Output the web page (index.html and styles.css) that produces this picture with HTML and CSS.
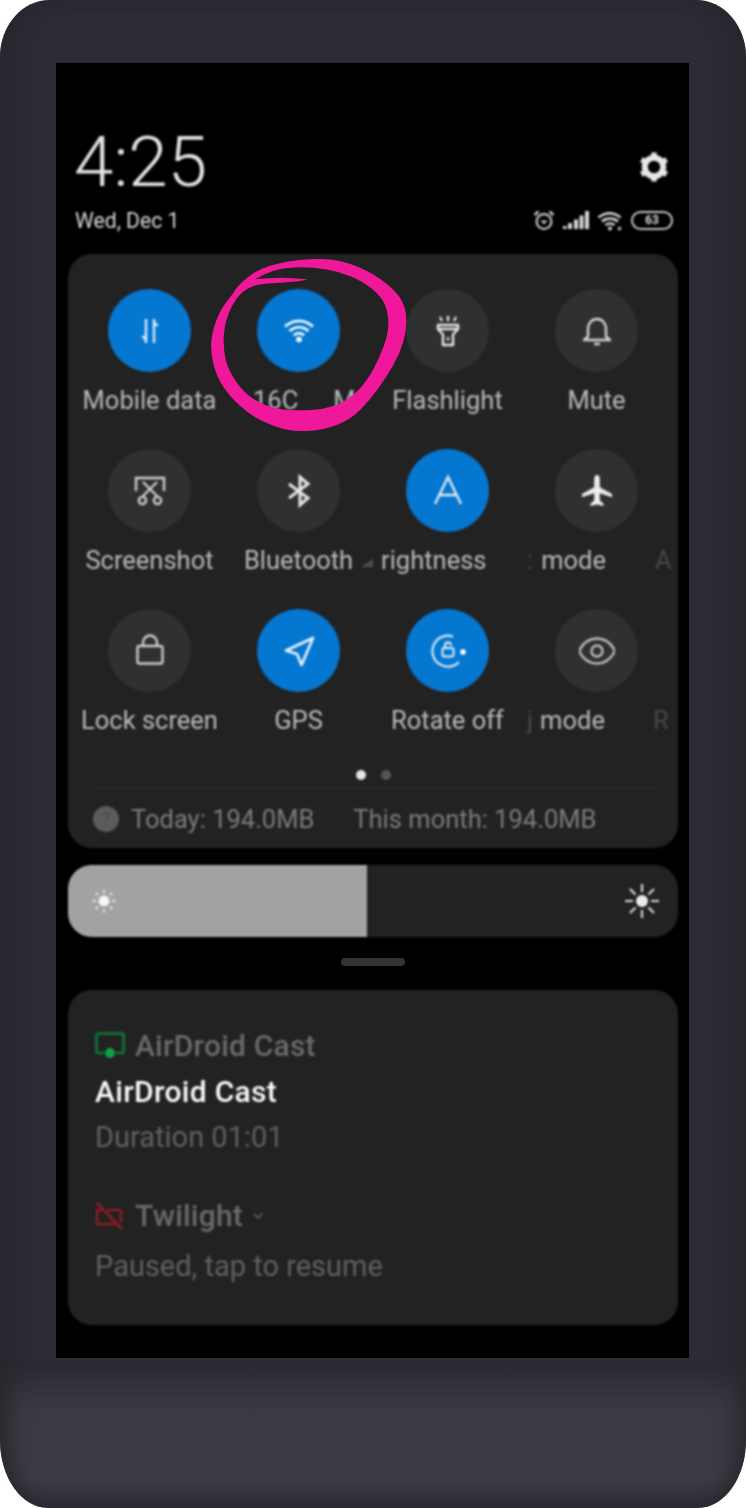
FILE: index.html
```html
<!DOCTYPE html>
<html lang="en">
<head>
<meta charset="utf-8">
<title>Quick settings</title>
<link rel="stylesheet" href="styles.css">
</head>
<body>
<div class="phone">
  <main class="screen">
    <header class="head">
      <div class="clock-col">
        <div class="clock">4:25</div>
        <div class="date">Wed, Dec 1</div>
      </div>
      <div class="status-col">
        <svg class="gear" viewBox="0 0 32 32"><circle cx="16" cy="16" r="9.2" fill="none" stroke="#e8e8e8" stroke-width="6"/><g stroke="#e8e8e8" stroke-width="5.5"><path d="M16 1.5v5M16 25.5v5M3.4 8.7l4.3 2.5M24.3 20.8l4.3 2.5M3.4 23.3l4.3-2.5M24.3 11.2l4.3-2.5"/></g></svg>
        <div class="status">
          <svg class="st-alarm" viewBox="0 0 22 22"><circle cx="11" cy="12.500" r="7.400" fill="none" stroke="#c4c4c4" stroke-width="2.200"/><path d="M7.500 11.500h7L11 15.500z" fill="#c4c4c4"/><path d="M1.500 6 5.500 2.500M20.500 6 16.500 2.500" stroke="#c4c4c4" stroke-width="2.600"/></svg>
          <svg class="st-signal" viewBox="0 0 26 18"><path d="M0 15h3.500v3H0zM5 12h4v6H5zM11 8.500h4V18h-4zM16.500 4.500h4V18h-4zM22 0h4v18h-4z" fill="#d6d6d6"/></svg>
          <svg class="st-wifi" viewBox="0 0 26 21"><path d="M1.500 7.500c6.500-5.800 15.500-5.800 22 0M5 11.500c4.500-4 11.500-4 16 0M8.500 15c2.500-2 6.500-2 9 0" fill="none" stroke="#d6d6d6" stroke-width="2.500"/><circle cx="13" cy="18.500" r="2" fill="#d6d6d6"/><circle cx="22.500" cy="18.500" r="2" fill="#a0a0a0"/></svg>
          <div class="battery">63</div>
        </div>
      </div>
    </header>

    <section class="panel">
      <div class="grid">
        <div class="tile">
          <div class="disc on"><svg class="ic" viewBox="0 0 36 36"><path d="M14 6v24M22 30V6" fill="none" stroke="#dbe9f5" stroke-width="2.400"/><path d="M15 30 9 23h6zM21 6l6 7h-6z" fill="#dbe9f5"/></svg></div>
          <div class="label">Mobile data</div>
        </div>
        <div class="tile">
          <div class="disc on"><svg class="ic" viewBox="0 0 36 36"><path d="M4 13.500c8.500-7.500 19.500-7.500 28 0M8.500 18c6-5 13-5 19 0M12.800 22.200c3.200-2.500 7.200-2.500 10.400 0" fill="none" stroke="#fff" stroke-width="2.500"/><circle cx="18" cy="26.500" r="2.800" fill="#fff"/></svg></div>
          <div class="label split-wifi"><span>16C</span><span>M</span></div>
        </div>
        <div class="tile">
          <div class="disc"><svg class="ic" viewBox="0 0 36 36"><path d="M8 12h20v4l-5 5.500V32H13V21.500L8 16zM8.500 16h19" fill="none" stroke="#e2e2e2" stroke-width="2.500" stroke-linejoin="round"/><path d="M18 24v3.500" stroke="#e2e2e2" stroke-width="2"/><path d="M10 4l2 4M18 3v5M26 4l-2 4" stroke="#e2e2e2" stroke-width="2.400"/></svg></div>
          <div class="label">Flashlight</div>
        </div>
        <div class="tile">
          <div class="disc"><svg class="ic" viewBox="0 0 36 36"><path d="M5 27h26l-4-3.500V16c0-5.500-3.500-10-9-10S9 10.500 9 16v7.500zM15 31h6" fill="none" stroke="#d2d2d2" stroke-width="2.400" stroke-linejoin="round"/></svg></div>
          <div class="label">Mute</div>
        </div>

        <div class="tile">
          <div class="disc"><svg class="ic" viewBox="0 0 36 36"><path d="M4 18V5h28v13" fill="none" stroke="#cdcdcd" stroke-width="2.400"/><path d="M11 9l14 14M25 9 11 23" stroke="#cdcdcd" stroke-width="2.400"/><circle cx="10.500" cy="27.500" r="3.600" fill="none" stroke="#cdcdcd" stroke-width="2.400"/><circle cx="25.500" cy="27.500" r="3.600" fill="none" stroke="#cdcdcd" stroke-width="2.400"/></svg></div>
          <div class="label">Screenshot</div>
        </div>
        <div class="tile">
          <div class="disc"><svg class="ic" viewBox="0 0 36 36"><path d="M8 11l19 14-8 7V4l8 7L8 25" fill="none" stroke="#e6e6e6" stroke-width="3"/></svg></div>
          <div class="label bt-label">Bluetooth<i class="wedge"></i></div>
        </div>
        <div class="tile">
          <div class="disc on"><svg class="ic" viewBox="0 0 36 36"><path d="M5 31 18 4l13 27M9.500 22h17" fill="none" stroke="#dbe9f5" stroke-width="2.400"/></svg></div>
          <div class="label rightness">rightness</div>
        </div>
        <div class="tile">
          <div class="disc"><svg class="ic" viewBox="0 0 36 36"><path d="M18 2c1.700 0 2.800 2 2.800 4.500v7.800L33 21v3.200l-12.200-4v7.300l3.700 3V33L18 31.500 11.500 33v-2.500l3.700-3v-7.300L3 24.200V21l12.200-6.700V6.500C15.200 4 16.300 2 18 2z" fill="#ececec"/></svg></div>
          <div class="label mode-label"><span class="faint">:</span><span>mode</span><span class="faint fade-a">A</span></div>
        </div>

        <div class="tile">
          <div class="disc"><svg class="ic" viewBox="0 0 36 36"><rect x="5.500" y="13" width="25" height="17.500" rx="2" fill="none" stroke="#cdcdcd" stroke-width="2.400"/><path d="M11 13V9.500a7 7 0 0 1 14 0V13" fill="none" stroke="#cdcdcd" stroke-width="2.400"/></svg></div>
          <div class="label">Lock screen</div>
        </div>
        <div class="tile">
          <div class="disc on"><svg class="ic" viewBox="0 0 36 36"><path d="M32 5 5 17.500l11 3.500 4.500 11z" fill="none" stroke="#eaf3fb" stroke-width="2.600" stroke-linejoin="round"/></svg></div>
          <div class="label">GPS</div>
        </div>
        <div class="tile">
          <div class="disc on"><svg class="ic" viewBox="0 0 36 36"><path d="M29 29A15.500 15.500 0 1 1 23 3.500" fill="none" stroke="#d8e8f5" stroke-width="2.200"/><rect x="12.500" y="15" width="11" height="8.500" rx="1.500" fill="none" stroke="#e6f1fa" stroke-width="2"/><path d="M15 15v-2.500a3 3 0 0 1 6 0" fill="none" stroke="#e6f1fa" stroke-width="2"/><circle cx="33" cy="19" r="2.800" fill="#fff"/></svg></div>
          <div class="label">Rotate off</div>
        </div>
        <div class="tile">
          <div class="disc"><svg class="ic" viewBox="0 0 36 36"><path d="M0 18C4 10 10.500 5.500 18 5.500S32 10 36 18c-4 8-10.500 12.500-18 12.500S4 26 0 18z" fill="none" stroke="#bdbdbd" stroke-width="2.400"/><circle cx="18" cy="18" r="5.500" fill="none" stroke="#bdbdbd" stroke-width="2.400"/></svg></div>
          <div class="label mode-label second"><span class="faint">j</span><span>mode</span><span class="faint fade-r">R</span></div>
        </div>
      </div>

      <div class="dots"><i class="dot cur"></i><i class="dot"></i></div>
      <div class="usage">
        <span class="help">?</span>
        <span class="today">Today: 194.0MB</span>
        <span>This month: 194.0MB</span>
      </div>
    </section>

    <div class="slider">
      <div class="fill">
        <svg class="sun-s" viewBox="0 0 24 24"><circle cx="12" cy="12" r="5" fill="#f6f6f6"/><path d="M12 1.500v3M12 19.500v3M1.500 12h3M19.500 12h3M4.500 4.500l2 2M17.500 17.500l2 2M4.500 19.500l2-2M17.500 6.500l2-2" stroke="#d8d8d8" stroke-width="2.200"/></svg>
      </div>
      <svg class="sun-l" viewBox="0 0 34 34"><circle cx="17" cy="17" r="6" fill="#ececec"/><path d="M17 0v8M17 26v8M0 17h8M26 17h8M5 5l5.500 5.500M23.500 23.500 29 29M5 29l5.500-5.500M23.500 10.500 29 5" stroke="#d8d8d8" stroke-width="2.200"/></svg>
    </div>

    <div class="handle"></div>

    <section class="card">
      <div class="app-row">
        <svg class="app-ic" viewBox="0 0 30 28"><path d="M9 21H3a1.500 1.500 0 0 1-1.500-1.500V3A1.500 1.500 0 0 1 3 1.500h24A1.500 1.500 0 0 1 28.500 3v16.500A1.500 1.500 0 0 1 27 21h-6" fill="none" stroke="#0e7a34" stroke-width="2.600"/><circle cx="15" cy="21" r="5" fill="#12a045"/></svg>
        <span class="app-name">AirDroid Cast</span>
      </div>
      <div class="note-title">AirDroid Cast</div>
      <div class="note-sub">Duration 01:01</div>
      <div class="app-row second-app">
        <svg class="app-ic twi" viewBox="0 0 28 30"><path d="M7 9H4a2 2 0 0 0-2 2v10a2 2 0 0 0 2 2h17M12 9h12a2 2 0 0 1 2 2v10" fill="none" stroke="#8c1c26" stroke-width="2.600"/><path d="M2 2l25 26" stroke="#8c1c26" stroke-width="2.600"/></svg>
        <span class="app-name">Twilight</span>
        <svg class="chev" viewBox="0 0 12 8"><path d="M1.500 1.500 6 6l4.500-4.500" fill="none" stroke="#5e5e5e" stroke-width="1.600"/></svg>
      </div>
      <div class="note-sub paused">Paused, tap to resume</div>
    </section>

    <svg class="scribble" viewBox="0 0 645 570" aria-hidden="true"><path fill-rule="evenodd" d="M107.500 117.500Q115 105 142.500 82.500Q170 60 210 47.500Q250 35 300 30Q350 25 390 28.500Q430 32 475 51Q520 70 555 97.500Q590 125 604 150Q618 175 619 207.500Q620 240 610 275Q600 310 580 345Q560 380 535 415Q510 450 480 480Q450 510 410 525Q370 540 330 542.500Q290 545 255 537.500Q220 530 185 512.500Q150 495 120 467.500Q90 440 70 410Q50 380 41 345Q32 310 33.500 280Q35 250 47.500 215Q60 180 80 155Q100 130 107.500 117.500ZM165 88Q240 78 322 88Q300 96 240 98Q180 100 155 110Q130 120 112.500 142.500Q95 165 83.500 197.500Q72 230 71 265Q70 300 77.500 330Q85 360 105 390Q125 420 147.500 437.500Q170 455 200 466.500Q230 478 265 480Q300 482 335 480Q370 478 405 466.500Q440 455 470 425Q500 395 520 357.500Q540 320 552.500 285Q565 250 565 220Q565 190 555 165Q545 140 517.500 117.500Q490 95 455 80Q420 65 380 58.500Q340 52 300 52Q260 52 230 60Q200 68 165 88Z" fill="#f0189a"/></svg>
  </main>
</div>
</body>
</html>
```

FILE: styles.css
```css
* { box-sizing: border-box; }
html, body { margin: 0; padding: 0; background: #fff; }
body { width: 746px; height: 1508px; overflow: hidden; font-family: Roboto, "Noto Sans", sans-serif; }

.phone {
  width: 746px;
  height: 1508px;
  padding: 63px 57px 150px 56px;
  border-radius: 50px 50px 48px 48px / 57px 57px 68px 68px;
  background: linear-gradient(180deg, #2c2b36 0, #2c2b36 1358px, #2b2a34 1365px, #3b3943 1410px, #3d3b45 1480px, #2d2c36 1508px);
  box-shadow: inset 22px 0 22px -14px #26262a, inset -22px 0 22px -14px #26262a;
}

.screen {
  position: relative;
  width: 633px;
  height: 1295px;
  padding: 0 11px 0 12px;
  background: #000;
  display: flex;
  flex-direction: column;
}

.head, .panel, .slider, .card { filter: blur(0.8px); }

.head { display: flex; justify-content: space-between; height: 191px; }
.clock-col { padding: 61px 0 0 7px; }
.clock { font-size: 71px; font-weight: 300; line-height: 76px; color: #e2e2e2; margin-left: -1px; }
.date { margin-top: 9px; font-size: 21.200px; line-height: 24px; color: #d8d8d8; }

.status-col { display: flex; flex-direction: column; align-items: flex-end; padding-top: 88px; }
.gear { width: 32px; height: 32px; margin-right: 8px; }
.status { display: flex; align-items: center; gap: 8px; margin-top: 26px; margin-right: 5px; }
.st-alarm { width: 22px; height: 22px; }
.st-signal { width: 26px; height: 18px; }
.st-wifi { width: 26px; height: 21px; }
.battery {
  width: 42px; height: 19px; border: 2.500px solid #c4c4c4; border-radius: 10px;
  font-size: 12px; line-height: 14px; text-align: center; color: #d8d8d8; font-weight: 700;
}

.panel {
  width: 610px; height: 594px;
  background: #222222;
  border-radius: 24px;
  padding: 35px 7px 0;
}
.grid { display: grid; grid-template-columns: repeat(4, 149px); grid-auto-rows: 160px; }
.tile { display: flex; flex-direction: column; align-items: center; min-width: 0; }
.disc {
  width: 83px; height: 83px; border-radius: 50%;
  background: #303030;
  display: flex; align-items: center; justify-content: center;
}
.disc.on { background: #0477d1; }
.ic { width: 36px; height: 36px; }
.label {
  margin-top: 13px; width: 149px; height: 30px;
  font-size: 25.500px; line-height: 30px; color: #bababa;
  text-align: center; white-space: nowrap;
}
.split-wifi { display: flex; padding-left: 29px; gap: 35px; }
.bt-label { position: relative; }
.wedge {
  position: absolute; left: 137px; top: 14px; width: 0; height: 0;
  border-style: solid; border-width: 0 0 8px 12px;
  border-color: transparent transparent #4e4e4e transparent;
}
.rightness { text-align: left; padding-left: 8px; }
.mode-label { display: flex; align-items: baseline; padding-left: 5px; gap: 8px; }
.mode-label.second { padding-left: 5px; gap: 7px; }
.faint { color: #484848; }
.fade-a { margin-left: 41px; }
.fade-r { margin-left: 41px; }

.dots { display: flex; justify-content: center; gap: 15px; height: 10px; margin-top: 1px; }
.dot { width: 10px; height: 10px; border-radius: 50%; background: #555; }
.dot.cur { background: #e4e4e4; }

.usage {
  margin: 8px 17px 0;
  height: 60px;
  border-top: 1px solid #2e2e2e;
  display: flex; align-items: center;
  font-size: 25.500px; color: #7c7c7c;
}
.help {
  width: 26px; height: 26px; border-radius: 50%; background: #5c5c5c; color: #4c4c4c;
  font-size: 18px; line-height: 26px; text-align: center; margin: 0 12px 0 1px;
}
.today { margin-right: 39px; }

.slider {
  position: relative;
  width: 610px; height: 72px; margin-top: 17px;
  background: #222222; border-radius: 24px; overflow: hidden;
  display: flex; align-items: center; justify-content: flex-end;
}
.fill {
  position: absolute; left: 0; top: 0; bottom: 0; width: 299px;
  background: #a2a2a2; display: flex; align-items: center; padding-left: 23px;
}
.sun-s { width: 26px; height: 26px; }
.sun-l { width: 34px; height: 34px; margin-right: 19px; }

.handle { width: 64px; height: 8px; border-radius: 4px; background: #333; margin: 21px 0 0 273px; }

.card {
  width: 610px; height: 335px; margin-top: 24px;
  background: #222222; border-radius: 24px; padding: 38px 27px 0;
}
.app-row { display: flex; align-items: center; height: 36px; }
.app-ic { width: 30px; height: 28px; margin-right: 10px; }
.app-ic.twi { width: 28px; height: 30px; margin-right: 12px; }
.app-name { font-size: 30px; font-weight: 500; line-height: 36px; color: #6a6a6a; letter-spacing: .2px; }
.note-title { margin-top: 10px; font-size: 30px; font-weight: 500; line-height: 36px; color: #fafafa; letter-spacing: .3px; }
.note-sub { margin-top: 9px; font-size: 29px; line-height: 36px; color: #606060; }
.second-app { margin-top: 43px; }
.chev { width: 12px; height: 8px; margin-left: 9px; }
.paused { margin-top: 14px; }

.scribble { position: absolute; left: 144px; top: 187px; width: 215px; height: 190px; }
```
